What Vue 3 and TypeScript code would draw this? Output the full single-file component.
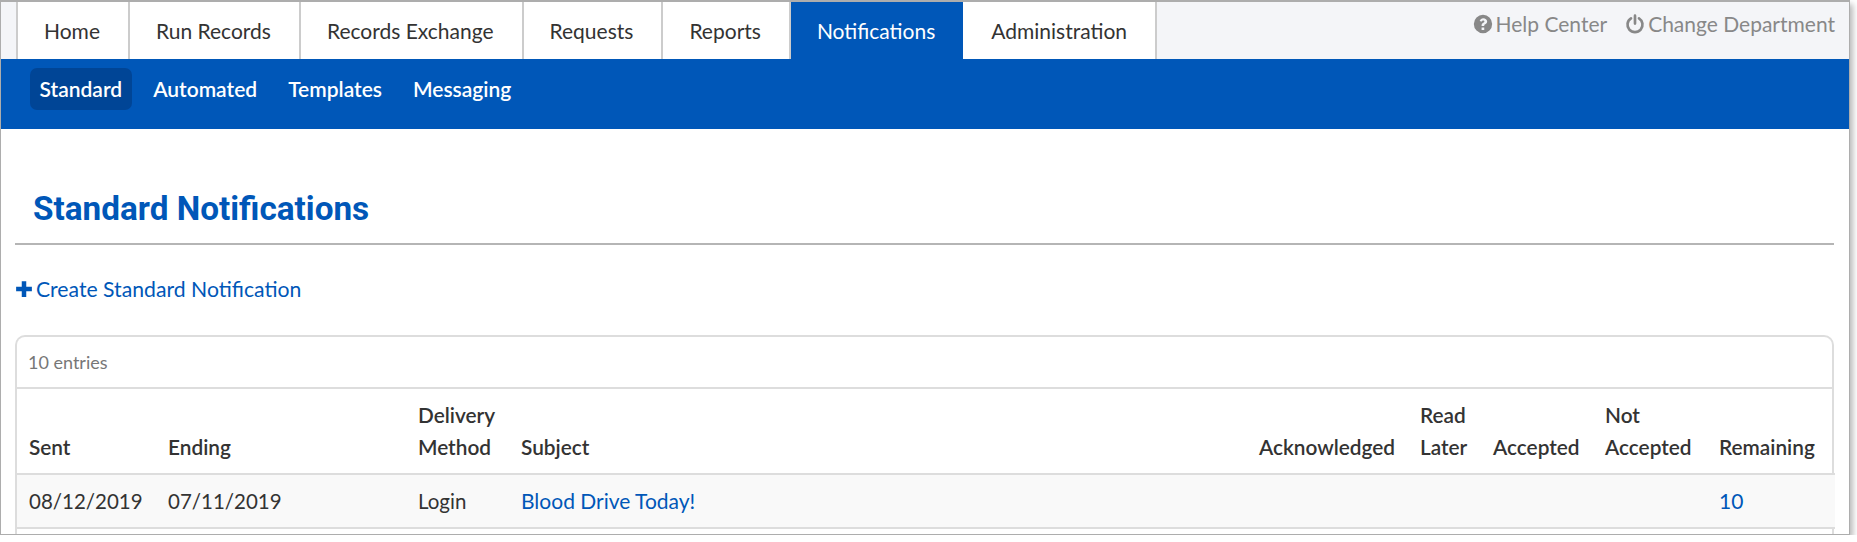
<script setup lang="ts">
// 通知列表页 - 顶部导航 + 标准通知表格
const tabs = ["Home", "Run Records", "Records Exchange", "Requests", "Reports", "Notifications", "Administration"];
const subTabs = ["Standard", "Automated", "Templates", "Messaging"];

const columns = [
  { lines: ["Sent"], width: 139 },
  { lines: ["Ending"], width: 250 },
  { lines: ["Delivery", "Method"], width: 103 },
  { lines: ["Subject"], width: 738 },
  { lines: ["Acknowledged"], width: 161 },
  { lines: ["Read", "Later"], width: 73 },
  { lines: ["Accepted"], width: 112 },
  { lines: ["Not", "Accepted"], width: 114 },
  { lines: ["Remaining"], width: 128 },
];
</script>

<template>
  <div class="frame">
    <header class="top-bar">
      <nav class="tabs">
        <a v-for="tab in tabs" :key="tab" class="tab" :class="{ active: tab === 'Notifications' }">{{ tab }}</a>
      </nav>
      <div class="util-links">
        <a class="util-link">
          <svg class="util-icon" viewBox="0 0 24 24">
            <path
              fill="currentColor"
              fill-rule="evenodd"
              d="M12 1a11 11 0 1 0 0 22 11 11 0 0 0 0-22zM12.2 5c2.7 0 4.8 1.6 4.8 4 0 1.9-1.1 2.7-2.3 3.4-.9.5-1.2.9-1.2 1.6v.5h-3.2v-.8c0-1.7.8-2.5 2-3.2.9-.5 1.4-.9 1.4-1.5 0-.7-.7-1.1-1.5-1.1-.9 0-1.5.5-2.2 1.3L8 8.100C9 6 10.300 5 12.200 5zM10.300 16.200h3.200V19.300h-3.200z"
            />
          </svg>
          Help Center
        </a>
        <a class="util-link">
          <svg class="util-icon" viewBox="0 0 24 24">
            <path
              fill="none"
              stroke="currentColor"
              stroke-width="3.200"
              stroke-linecap="round"
              d="M7.200 5.200a9 9 0 1 0 9.600 0M12 2v9.500"
            />
          </svg>
          Change Department
        </a>
      </div>
    </header>

    <nav class="sub-nav">
      <a v-for="sub in subTabs" :key="sub" class="sub-tab" :class="{ active: sub === 'Standard' }">{{ sub }}</a>
    </nav>

    <main class="content">
      <h1 class="page-title">Standard Notifications</h1>

      <a class="create-link">
        <svg class="plus-icon" viewBox="0 0 16 16">
          <path fill="currentColor" d="M6 1h4v5h5v4h-5v5H6v-5H1V6h5z" />
        </svg>
        Create Standard Notification
      </a>

      <section class="card">
        <div class="card-head">10 entries</div>
        <table class="grid">
          <colgroup>
            <col v-for="(col, i) in columns" :key="i" :style="{ width: col.width + 'px' }" />
          </colgroup>
          <thead>
            <tr>
              <th v-for="(col, i) in columns" :key="i">
                <template v-for="(line, j) in col.lines" :key="j">{{ line }}<br v-if="j < col.lines.length - 1" /></template>
              </th>
            </tr>
          </thead>
          <tbody>
            <tr class="striped">
              <td>08/12/2019</td>
              <td>07/11/2019</td>
              <td>Login</td>
              <td><a class="link">Blood Drive Today!</a></td>
              <td></td>
              <td></td>
              <td></td>
              <td></td>
              <td><a class="link">10</a></td>
            </tr>
            <tr>
              <td>&nbsp;</td>
              <td></td>
              <td></td>
              <td></td>
              <td></td>
              <td></td>
              <td></td>
              <td></td>
              <td></td>
            </tr>
          </tbody>
        </table>
      </section>
    </main>
  </div>
</template>

<style>
html,
body {
  margin: 0;
  background: #fff;
}
</style>

<style scoped>
.frame {
  width: 1848px;
  height: 532px;
  box-sizing: content-box;
  border: 1px solid #adadad;
  border-top-width: 2px;
  overflow: hidden;
  background: #fff;
  font-family: Lato, "Liberation Sans", sans-serif;
  color: #333;
  box-shadow: 3px 4px 6px rgba(0, 0, 0, 0.28);
}

/* ===== 顶部导航 ===== */
.top-bar {
  display: flex;
  justify-content: space-between;
  height: 57px;
  background: #f4f5f8;
  padding-left: 15px;
}

.tabs {
  display: flex;
}

.tab {
  display: flex;
  align-items: center;
  justify-content: center;
  box-sizing: border-box;
  height: 57px;
  padding: 0 28px 0 26px;
  background: #fff;
  border-left: 2px solid #ccc;
  font-size: 21px;
  color: #333;
  white-space: nowrap;
}

.tab:last-child {
  border-right: 2px solid #ccc;
}

.tab.active {
  background: #0057b8;
  color: #fff;
  border-left-color: #ccc;
}

.tab.active + .tab {
  border-left: 0;
  padding-left: 28px;
}

.util-links {
  display: flex;
  gap: 18px;
  padding: 8px 14px 0 0;
  font-size: 21px;
  line-height: 27px;
  color: #888;
}

.util-link {
  display: flex;
  align-items: center;
  gap: 3px;
  height: 27px;
  white-space: nowrap;
}

.util-icon {
  width: 20px;
  height: 20px;
  flex-shrink: 0;
}

/* ===== 二级导航 ===== */
.sub-nav {
  display: flex;
  height: 70px;
  box-sizing: border-box;
  padding: 9px 0 0 29px;
  background: #0057b8;
}

.sub-tab {
  box-sizing: border-box;
  height: 42px;
  padding: 0 9.500px;
  border-radius: 7px;
  font-size: 21px;
  font-weight: 600;
  line-height: 42px;
  color: #fff;
  white-space: nowrap;
}

.sub-tab + .sub-tab {
  margin-left: 12px;
}

.sub-tab.active {
  background: #004596;
}

/* ===== 内容区 ===== */
.content {
  padding: 0 15px 0 14px;
}

.page-title {
  margin: 0;
  height: 116px;
  box-sizing: border-box;
  padding: 60px 0 0 18px;
  border-bottom: 2px solid #b5b5b5;
  font-family: Roboto, "Liberation Sans", sans-serif;
  font-size: 33.300px;
  font-weight: 700;
  line-height: 40px;
  color: #0057b8;
  white-space: nowrap;
}

.create-link {
  display: flex;
  align-items: center;
  gap: 3px;
  margin-top: 30px;
  height: 28px;
  font-size: 21.200px;
  color: #0057b8;
}

.plus-icon {
  width: 18px;
  height: 18px;
  flex-shrink: 0;
}

.card {
  margin-top: 32px;
  border: 2px solid #ddd;
  border-bottom: 0;
  border-radius: 10px 10px 0 0;
  width: 1819px;
  box-sizing: border-box;
}

.card-head {
  height: 52px;
  box-sizing: border-box;
  padding: 13px 11px 0;
  border-bottom: 2px solid #ddd;
  font-size: 18px;
  line-height: 24px;
  color: #777;
}

.grid {
  width: 100%;
  table-layout: fixed;
  border-collapse: collapse;
  font-size: 20.500px;
}

.grid th {
  padding: 10px 12px 10px;
  border-bottom: 2px solid #ddd;
  font-size: 20.800px;
  font-weight: 600;
  line-height: 32px;
  text-align: left;
  vertical-align: bottom;
  white-space: nowrap;
  color: #333;
}

.grid td {
  height: 54px;
  padding: 0 12px;
  border-bottom: 2px solid #ddd;
  line-height: 27px;
  white-space: nowrap;
  box-sizing: border-box;
}

.striped {
  background: #f9f9f9;
}

.link {
  font-size: 21px;
  color: #0057b8;
}
</style>
